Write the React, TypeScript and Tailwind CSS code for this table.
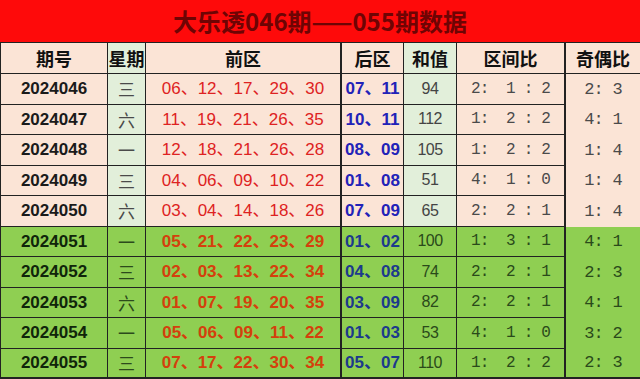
import React from "react";

type Row = [string, string, string, string, string, string, string];

const rows: Row[] = [
  ["2024046", "三", "06、12、17、29、30", "07、11", "94", "2:  1 : 2", "2: 3"],
  ["2024047", "六", "11、19、21、26、35", "10、11", "112", "1:  2 : 2", "4: 1"],
  ["2024048", "一", "12、18、21、26、28", "08、09", "105", "1:  2 : 2", "1: 4"],
  ["2024049", "三", "04、06、09、10、22", "01、08", "51", "4:  1 : 0", "1: 4"],
  ["2024050", "六", "03、04、14、18、26", "07、09", "65", "2:  2 : 1", "1: 4"],
  ["2024051", "一", "05、21、22、23、29", "01、02", "100", "1:  3 : 1", "4: 1"],
  ["2024052", "三", "02、03、13、22、34", "04、08", "74", "2:  2 : 1", "2: 3"],
  ["2024053", "六", "01、07、19、20、35", "03、09", "82", "2:  2 : 1", "4: 1"],
  ["2024054", "一", "05、06、09、11、22", "01、03", "53", "4:  1 : 0", "3: 2"],
  ["2024055", "三", "07、17、22、30、34", "05、07", "110", "1:  2 : 2", "2: 3"],
];

const sans = "font-['Liberation_Sans','Noto_Sans_CJK_SC',sans-serif]";
const cjk = "font-['Noto_Sans_CJK_SC','Liberation_Sans',sans-serif]";
const mono = "font-['Liberation_Mono','DejaVu_Sans_Mono',monospace]";

export default function App() {
  return (
    <div className={`w-[640px] h-[379px] overflow-hidden bg-white ${sans}`}>
      <div className="h-[43px] bg-[#fe0a0a] border-b border-[#222] flex items-center justify-center">
        <span className={`text-[24px] font-bold text-[#6e0404] leading-none ${cjk}`}>
          大乐透046期——055期数据
        </span>
      </div>
      <div className="flex h-[31px] border-b border-[#222] text-[18px] font-bold text-[#111]">
        <div className={`w-[108px] border-l border-r border-[#222] bg-[#fbe4d6] flex items-center justify-center ${cjk}`}>期号</div>
        <div className={`w-[38px] border-r border-[#222] bg-[#e2efda] flex items-center justify-center ${cjk}`}>星期</div>
        <div className={`w-[196px] border-r-2 border-[#222] bg-[#fbe4d6] flex items-center justify-center ${cjk}`}>前区</div>
        <div className={`w-[62px] border-r border-[#222] bg-[#fbe4d6] flex items-center justify-center ${cjk}`}>后区</div>
        <div className={`w-[53px] border-r border-[#222] bg-[#e2efda] flex items-center justify-center ${cjk}`}>和值</div>
        <div className={`w-[109px] border-r-2 border-[#222] bg-[#fbe4d6] flex items-center justify-center ${cjk}`}>区间比</div>
        <div className={`flex-1 bg-[#fbe4d6] flex items-center justify-center ${cjk}`}>奇偶比</div>
      </div>
      {rows.map((r, i) => {
        const top = i < 5;
        const base = top ? "bg-[#fbe4d6]" : "bg-[#8fcf52]";
        const light = top ? "bg-[#e2efda]" : "bg-[#8fcf52]";
        const rowBorder = i === 9 ? "border-b-2" : "border-b";
        return (
          <div key={r[0]} className="flex h-[30.5px]">
            <div className={`w-[108px] border-l border-r ${rowBorder} border-[#222] ${base} flex items-center justify-center text-[17px] font-bold ${top ? "text-[#1a1a1a]" : "text-[#10250a]"}`}>
              {r[0]}
            </div>
            <div className={`w-[38px] border-r ${rowBorder} border-[#222] ${light} flex items-center justify-center text-[17px] ${cjk} ${top ? "text-[#4a4a4a]" : "text-[#2c4a1c]"}`}>
              {r[1]}
            </div>
            <div className={`w-[196px] border-r-2 ${rowBorder} border-[#222] ${base} flex items-center justify-center text-[17px] ${top ? "text-[#de2222] font-normal" : "text-[#d4400c] font-bold"}`}>
              {r[2]}
            </div>
            <div className={`w-[62px] border-r ${rowBorder} border-[#222] ${base} flex items-center justify-center text-[17px] font-bold ${top ? "text-[#2222b8]" : "text-[#1c3a8c]"}`}>
              {r[3]}
            </div>
            <div className={`w-[53px] border-r ${rowBorder} border-[#222] ${light} flex items-center justify-center text-[16px] tracking-[-0.5px] ${top ? "text-[#444]" : "text-[#2a4a1a]"}`}>
              {r[4]}
            </div>
            <div className={`w-[109px] border-r-2 ${rowBorder} border-[#222] ${base} flex items-center justify-center text-[16px] tracking-[-0.8px] whitespace-pre ${mono} ${top ? "text-[#4a4a4a]" : "text-[#2a4a1a]"}`}>
              {r[5]}
            </div>
            <div className={`flex-1 ${i === 9 ? "border-b-2 border-[#222]" : ""} ${top ? "bg-[#fbe4d6]" : "bg-[#8fcf52]"} flex items-center justify-center text-[17px] tracking-[-0.8px] whitespace-pre ${mono} ${top ? "text-[#4a4a4a]" : "text-[#2a4a1a]"}`}>
              {r[6]}
            </div>
          </div>
        );
      })}
    </div>
  );
}
